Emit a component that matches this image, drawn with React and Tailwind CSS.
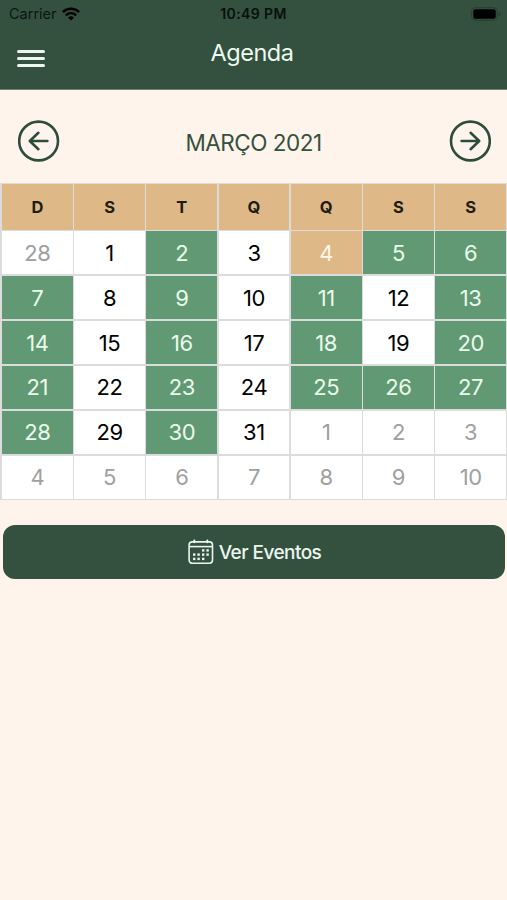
import React from 'react';
import clsx from 'clsx';

const WEEK_DAYS = ['D', 'S', 'T', 'Q', 'Q', 'S', 'S'];

// Days of march that have at least one event
const EVENT_DAYS = [2, 5, 6, 7, 9, 11, 13, 14, 16, 18, 20, 21, 23, 25, 26, 27, 28, 30];
const TODAY = 4;

// Six full weeks, starting on february 28th
const DAYS = Array.from({ length: 42 }, (_, i) => {
  if (i === 0) return { day: 28, outside: true };
  if (i > 31) return { day: i - 31, outside: true };
  return { day: i, outside: false };
});

const WifiIcon = () => (
  <svg className="w-[18px] h-[14px]" viewBox="0 0 18 14" fill="none" stroke="#000" strokeWidth="2.4">
    <path d="M0.9 5.1a11.5 11.5 0 0 1 16.2 0" />
    <path d="M3.8 8.3a7.4 7.4 0 0 1 10.4 0" />
    <path d="M9 13.6 6.1 10.7a4.1 4.1 0 0 1 5.8 0z" fill="#000" stroke="none" />
  </svg>
);

const BatteryIcon = () => (
  <svg className="w-[30px] h-[14px]" viewBox="0 0 30 14" fill="none">
    <rect x="0.7" y="0.7" width="25.6" height="12.6" rx="3.6" stroke="#263d30" strokeWidth="1" />
    <rect x="2.3" y="2.3" width="22.4" height="9.4" rx="2" fill="#000" />
    <path d="M27.8 5v4.4c1-.4 1.6-1.2 1.6-2.2s-.6-1.8-1.6-2.2z" fill="#263d30" />
  </svg>
);

const ArrowButton = ({ direction, label }) => (
  <button type="button" aria-label={label} className="w-[42px] h-[42px]">
    <svg
      className={clsx('w-full h-full', direction === 'right' && '-scale-x-100')}
      viewBox="0 0 42 42"
      fill="none"
      stroke="#2d4d3c"
      strokeWidth="2.6"
      strokeLinecap="round"
      strokeLinejoin="round"
    >
      <circle cx="20.6" cy="21" r="19.4" />
      <path d="M20.4 12.8 11.8 21l8.6 8.2M12 21h17.4" />
    </svg>
  </button>
);

const CalendarIcon = () => (
  <svg className="w-[26px] h-[26px]" viewBox="0 0 26 26" fill="none" stroke="#e9f6ed" strokeWidth="1.6">
    <rect x="1.1" y="2.9" width="23.4" height="21.4" rx="3.2" />
    <path d="M1.1 7.6h23.4" />
    <path d="M6.3 1.4v1.8M19.3 1.4v1.8" strokeWidth="2" strokeLinecap="round" />
    <g fill="#e9f6ed" stroke="none">
      <rect x="14" y="10.2" width="2.4" height="2.4" />
      <rect x="18.4" y="10.2" width="2.4" height="2.4" />
      <rect x="5" y="14.4" width="2.4" height="2.4" />
      <rect x="9.4" y="14.4" width="2.4" height="2.4" />
      <rect x="14" y="14.4" width="2.4" height="2.4" />
      <rect x="18.4" y="14.4" width="2.4" height="2.4" />
      <rect x="5" y="18.7" width="2.4" height="2.4" />
      <rect x="9.4" y="18.7" width="2.4" height="2.4" />
      <rect x="14" y="18.7" width="2.4" height="2.4" />
    </g>
  </svg>
);

const DayCell = ({ day, outside }) => {
  const hasEvent = !outside && EVENT_DAYS.includes(day);
  const isToday = !outside && day === TODAY;

  return (
    <div
      className={clsx(
        'flex items-center justify-center text-[22px] leading-none tracking-[-0.4px]',
        hasEvent && 'bg-[#629975] text-[#e9fbe9]',
        isToday && 'bg-[#deb887] text-[#fff6e9]',
        outside && 'bg-white text-[#a0a0a0]',
        !hasEvent && !isToday && !outside && 'bg-white text-black'
      )}
    >
      {day}
    </div>
  );
};

const App = () => {
  return (
    <div className="w-full h-[900px] bg-[#fff4eb] font-[Inter,'Liberation_Sans',sans-serif] overflow-hidden">

      {/* Header */}
      <header className="h-[90px] bg-[#345140] border-b border-[#718074]">
        <div className="h-7 grid grid-cols-3 items-center pl-[9px] pr-[6px] text-black">
          <div className="flex items-center gap-[5px]">
            <span className="text-[14.5px] leading-none text-[#0c1510]">Carrier</span>
            <WifiIcon />
          </div>
          <span className="text-center text-[14px] leading-none font-semibold tracking-[0.4px] mr-[3px] text-[#08100b]">10:49 PM</span>
          <div className="flex justify-end">
            <BatteryIcon />
          </div>
        </div>

        <div className="h-[50px] grid grid-cols-[60px_1fr_60px] items-center">
          <button type="button" aria-label="Menu" className="flex flex-col gap-[4.5px] w-[28px] ml-[17px] mt-[11px]">
            <span className="h-[2.5px] rounded-full bg-[#edf6ef]" />
            <span className="h-[2.5px] rounded-full bg-[#edf6ef]" />
            <span className="h-[2.5px] rounded-full bg-[#edf6ef]" />
          </button>
          <h1 className="text-center text-[23.5px] leading-none text-[#eefaf0] -mt-px mr-[3px] tracking-[-0.5px]">Agenda</h1>
        </div>
      </header>

      {/* Month navigation */}
      <div className="h-[93px] flex items-center justify-between pl-[18px] pr-4 pt-[9px]">
        <ArrowButton direction="left" label="Mês anterior" />
        <h2 className="text-[22.5px] leading-none text-[#345140] tracking-[-0.5px] mt-[4px] mr-[2px]">MARÇO 2021</h2>
        <ArrowButton direction="right" label="Próximo mês" />
      </div>

      {/* Calendar */}
      <div className="h-[317px] grid grid-cols-7 grid-rows-[45.5px_repeat(6,1fr)] gap-[1.5px] pl-[2px] pr-px py-px bg-[#dcdcdc]">
        {WEEK_DAYS.map((name, i) => (
          <div key={i} className="flex items-center justify-center bg-[#deb887] text-[16.5px] leading-none font-bold text-[#221b12]">
            {name}
          </div>
        ))}
        {DAYS.map((item, i) => (
          <DayCell key={i} {...item} />
        ))}
      </div>

      <div className="pt-[25px] pl-[3px] pr-[2px]">
        <button
          type="button"
          className="w-full h-[54px] rounded-[12px] bg-[#345140] flex items-center justify-center gap-[5px] pl-[1px] text-[19px] leading-none font-medium text-[#eaf7ee] tracking-[-0.55px]"
        >
          <CalendarIcon />
          Ver Eventos
        </button>
      </div>

    </div>
  );
};

export default App;
